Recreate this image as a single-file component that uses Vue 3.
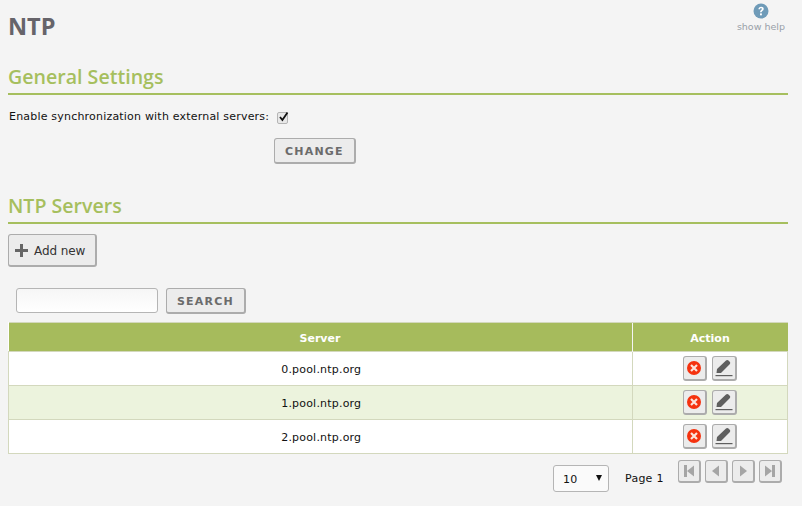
<template>
  <div class="page">
    <header class="top">
      <h1>NTP</h1>
      <a class="help">
        <svg width="16" height="16" viewBox="0 0 16 16">
          <circle cx="8" cy="8" r="7.5" fill="#6f9bb8" />
          <path d="M5.400 6.200c0-1.600 1.200-2.500 2.700-2.500s2.600.9 2.600 2.200c0 1.900-2.100 1.900-2.100 3.400H7c0-2.200 1.800-2.200 1.800-3.300 0-.5-.3-.9-.8-.9-.6 0-.9.4-.9 1.100z" fill="#fff" />
          <rect x="7" y="10.400" width="1.900" height="1.900" fill="#fff" />
        </svg>
        <span>show help</span>
      </a>
    </header>

    <h2 class="section first">General Settings</h2>
    <div class="sync">
      <label>Enable synchronization with external servers:</label>
      <span class="check">
        <svg width="12" height="12" viewBox="0 0 12 12">
          <path d="M2 6l2.400 3L9.500 1.500" fill="none" stroke="#111" stroke-width="1.800" />
        </svg>
      </span>
    </div>
    <div class="change-row">
      <button class="btn caps">CHANGE</button>
    </div>

    <h2 class="section second">NTP Servers</h2>
    <button class="btn add">
      <svg width="13" height="13" viewBox="0 0 13 13">
        <path d="M5 0h3v5h5v3H8v5H5V8H0V5h5z" fill="#666" />
      </svg>
      Add new
    </button>

    <div class="search">
      <input type="text" />
      <button class="btn caps">SEARCH</button>
    </div>

    <table>
      <thead>
        <tr>
          <th>Server</th>
          <th class="action">Action</th>
        </tr>
      </thead>
      <tbody>
        <tr v-for="server in servers" :key="server">
          <td>{{ server }}</td>
          <td class="action">
            <div class="icons">
              <button class="btn icon">
                <svg width="16" height="16" viewBox="0 0 16 16">
                  <circle cx="8" cy="8" r="7" fill="#f5320f" />
                  <path d="M5 5l6 6M11 5l-6 6" stroke="#fbe4dc" stroke-width="2.200" />
                </svg>
              </button>
              <button class="btn icon edit">
                <svg width="18" height="18" viewBox="0 0 18 18">
                  <path d="M1.500 14l.5-4L11 1.500c.8-.7 1.800-.7 2.500 0l1.200 1.200c.7.7.7 1.700 0 2.500L6 14z" fill="#5f5f5f" />
                  <rect x="0.500" y="16" width="17" height="1.200" fill="#5f5f5f" />
                </svg>
              </button>
            </div>
          </td>
        </tr>
      </tbody>
    </table>

    <div class="pager">
      <div class="size">
        <span>10</span>
        <i></i>
      </div>
      <span class="label">Page 1</span>
      <div class="nav">
        <button class="btn step" v-for="d in steps" :key="d">
          <svg width="14" height="14" viewBox="0 0 14 14"><path :d="d" fill="#a5a5a5" /></svg>
        </button>
      </div>
    </div>
  </div>
</template>

<script setup>
const servers = ['0.pool.ntp.org', '1.pool.ntp.org', '2.pool.ntp.org']

const steps = [
  'M2 1h3v12H2zM12 1.500v11L5 7z',
  'M10 1.500v11L3 7z',
  'M4 1.500v11L11 7z',
  'M2 1.500v11L9 7zM9 1h3v12H9z',
]
</script>

<style>
html, body {
  background: #f4f4f4;
}
</style>

<style scoped>
.page {
  width: 802px;
  height: 506px;
  padding: 0 14px 0 8px;
  box-sizing: border-box;
  overflow: hidden;
  font-family: "DejaVu Sans", sans-serif;
  font-size: 11px;
  color: #111;
}
.top {
  display: flex;
  justify-content: space-between;
  align-items: flex-start;
  height: 61px;
}
h1 {
  margin: 11px 0 0;
  font-family: "Open Sans", sans-serif;
  font-size: 23.500px;
  line-height: 30px;
  font-weight: 700;
  color: #66646a;
}
.help {
  display: flex;
  flex-direction: column;
  align-items: center;
  gap: 1px;
  margin: 3px 3px 0 0;
  color: #98a0a8;
  font-size: 9.500px;
  line-height: 13px;
}
.section {
  margin: 0;
  padding-bottom: 1px;
  border-bottom: 2px solid #a6bf5e;
  font-family: "Open Sans", sans-serif;
  font-size: 19.600px;
  line-height: 31px;
  font-weight: 600;
  color: #a6bf5e;
}
.sync {
  display: flex;
  align-items: center;
  height: 20px;
  margin: 11px 0 0 1px;
  letter-spacing: .2px;
}
.check {
  display: flex;
  width: 9px;
  height: 10px;
  margin: 3px 0 0 8px;
  border: 1px solid #b5b5b5;
  border-radius: 2px;
  background: #e8e8e8;
}
.check svg {
  margin: -2px 0 0 0;
  flex: none;
}
.change-row {
  padding-left: 266px;
  margin-top: 12px;
}
.btn {
  box-sizing: border-box;
  border: 1px solid #acacac;
  border-width: 1px 2px 2px 1px;
  border-radius: 3px;
  background: #ececec;
  padding: 0;
  font-family: inherit;
}
.caps {
  height: 26px;
  padding: 2px 10px 0;
  font-size: 11px;
  font-weight: 700;
  letter-spacing: 1.200px;
  color: #6b6b6b;
}
.second {
  margin-top: 26px;
}
.add {
  display: flex;
  align-items: center;
  gap: 6px;
  width: 89px;
  height: 33px;
  margin-top: 10px;
  padding: 1px 0 0 6px;
  font-size: 12px;
  letter-spacing: -.1px;
  color: #333;
}
.search {
  display: flex;
  gap: 8px;
  margin: 21px 0 8px 8px;
}
.search input {
  box-sizing: border-box;
  width: 142px;
  height: 25px;
  border: 1px solid #b5b5b5;
  border-radius: 3px;
  background: linear-gradient(#f6f6f6, #fff);
}
table {
  width: 780px;
  border-collapse: collapse;
  table-layout: fixed;
  background: #fff;
}
th {
  height: 26px;
  padding: 2px 0 0;
  background: #a6bb5c;
  color: #fff;
  font-size: 11px;
  border-top: 1px solid #d3d8bd;
}
th.action {
  width: 155px;
  border-left: 1px solid #f4f4f4;
}
td {
  height: 31px;
  padding: 2px 0 0;
  text-align: center;
  letter-spacing: .2px;
  border: 1px solid #d3d8bd;
}
td:first-child {
  padding-left: 2px;
}
tbody tr:nth-child(2) td {
  background: #ecf3dd;
}
.icons {
  display: flex;
  justify-content: center;
  gap: 5px;
  margin-top: -3px;
}
.icon {
  display: flex;
  align-items: center;
  justify-content: center;
  width: 24px;
  height: 25px;
}
.edit {
  width: 25px;
}
.pager {
  display: flex;
  align-items: flex-start;
  margin-top: 6px;
  padding-left: 545px;
}
.size {
  box-sizing: border-box;
  display: flex;
  justify-content: space-between;
  width: 56px;
  height: 27px;
  margin-top: 5px;
  padding: 7px 6px 0 9px;
  border: 1px solid #b5b5b5;
  border-radius: 3px;
  background: #fafafa;
  letter-spacing: .2px;
}
.size i {
  width: 0;
  height: 0;
  margin-top: 2px;
  border: 3px solid transparent;
  border-top: 6px solid #111;
  border-bottom: 0;
}
.label {
  margin: 12px 0 0 16px;
  letter-spacing: .25px;
}
.nav {
  display: flex;
  gap: 4px;
  margin-left: 14px;
}
.step {
  display: flex;
  align-items: center;
  justify-content: center;
  width: 23px;
  height: 23px;
}
</style>
